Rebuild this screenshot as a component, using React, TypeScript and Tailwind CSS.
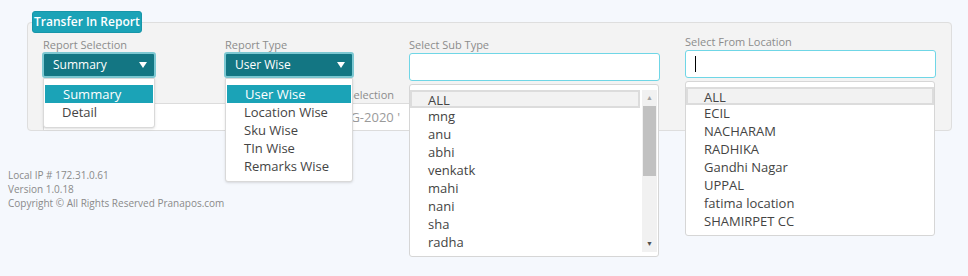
const subTypes = ["ALL", "mng", "anu", "abhi", "venkatk", "mahi", "nani", "sha", "radha"];
const locations = ["ALL", "ECIL", "NACHARAM", "RADHIKA", "Gandhi Nagar", "UPPAL", "fatima location", "SHAMIRPET CC"];
const reportTypes = ["User Wise", "Location Wise", "Sku Wise", "TIn Wise", "Remarks Wise"];

function TealSelect({ value, options, width }: { value: string; options: string[]; width: string }) {
  return (
    <div className={`relative ${width}`}>
      <div className="h-[26px] rounded-[3px] border-2 border-[#7cc8d2] bg-[#137683] flex items-center justify-between pl-[9px] pr-[7px] text-white text-[12px]">
        <span>{value}</span>
        {/* caret */}
        <span className="w-0 h-0 border-l-[4px] border-r-[4px] border-t-[6px] border-l-transparent border-r-transparent border-t-white" />
      </div>
      {/* open list */}
      <div className="absolute left-[1px] right-[1px] top-[26px] z-20 bg-white border border-[#d9d9d9] rounded-b-[3px] pt-[6px] pb-[6px] shadow-sm">
        {options.map((o, i) => (
          <div
            key={o}
            className={`h-[18px] leading-[18px] pl-[18px] text-[13px] ${
              i === 0 ? "bg-[#1ba3b7] text-white mx-[1px] pl-[17px]" : "text-[#444]"
            }`}
          >
            {o}
          </div>
        ))}
      </div>
    </div>
  );
}

function ListBox({ items, scroll }: { items: string[]; scroll?: boolean }) {
  return (
    <div className="absolute left-0 right-[1px] z-20 bg-white border border-[#d6d6d6] rounded-[3px] pt-[5px] pb-[4px] flex">
      <div className="flex-1">
        {items.map((o, i) => (
          <div
            key={o}
            className={`h-[18px] leading-[16px] text-[13px] text-[#444] ${
              i === 0 ? "border-2 border-[#dcdcdc] bg-[#f2f2f2] pl-[16px]" : "pl-[18px]"
            }`}
          >
            {o}
          </div>
        ))}
      </div>
      {scroll && (
        <div className="w-[15px] ml-[2px] mr-[1px] bg-[#f1f1f1] flex flex-col items-center">
          <span className="text-[7px] text-[#a3a3a3] leading-[16px]">▲</span>
          <div className="w-[13px] h-[70px] bg-[#c1c1c1]" />
          <div className="flex-1" />
          <span className="text-[7px] text-[#505050] leading-[16px]">▼</span>
        </div>
      )}
    </div>
  );
}

export default function App() {
  return (
    <div className="w-[968px] h-[276px] bg-[#f5f8fd] pt-[11px] text-[#444] overflow-hidden" style={{ fontFamily: '"Open Sans", sans-serif' }}>
      <fieldset className="ml-[27px] w-[925px] h-[120px] border border-[#dedede] rounded-[4px] bg-[#f3f3f3] pl-[14px]">
        <legend className="-ml-[10px] h-[22px] px-[1px] bg-[#1ba3b7] border border-[#1796a9] rounded-[3px] text-white text-[12px] font-semibold leading-[20px]">
          Transfer In Report
        </legend>

        {/* first row */}
        <div className="flex mt-[4px]">
          <div className="w-[114px]">
            <div className="text-[11px] text-[#8c8c8c] h-[15px] leading-[15px] pl-[1px]">Report Selection</div>
            <TealSelect value="Summary" options={["Summary", "Detail"]} width="w-[114px]" />
          </div>

          <div className="w-[130px] ml-[68px]">
            <div className="text-[11px] text-[#8c8c8c] h-[15px] leading-[15px] pl-[1px]">Report Type</div>
            <TealSelect value="User Wise" options={reportTypes} width="w-[130px]" />
          </div>

          <div className="w-[251px] ml-[55px] relative">
            <div className="text-[11px] text-[#8c8c8c] h-[15px] leading-[15px]">Select Sub Type</div>
            <div className="h-[28px] mt-[1px] bg-white border border-[#6fd6e6] rounded-[3px]" />
            <div className="relative mt-[3px]">
              <ListBox items={subTypes} scroll />
            </div>
          </div>

          <div className="w-[251px] ml-[25px] -mt-[3px] relative">
            <div className="text-[11px] text-[#8c8c8c] h-[15px] leading-[15px]">Select From Location</div>
            <div className="h-[28px] mt-[1px] bg-white border border-[#6fd6e6] rounded-[3px] pl-[9px] flex items-center">
              <span className="w-[1px] h-[16px] bg-black" />
            </div>
            <div className="relative mt-[3px]">
              <ListBox items={locations} />
            </div>
          </div>
        </div>

        {/* second row */}
        <div className="w-[367px] ml-[1px] mt-[3px]">
          <div className="text-[11px] text-[#8c8c8c] h-[15px] leading-[15px] text-right pr-[16px]">Date Selection</div>
          <div className="h-[28px] mt-[1px] bg-white border border-[#dcdcdc] text-[13px] text-[#9a9a9a] leading-[26px] text-right pr-[9px]">
            31-AUG-2020 '
          </div>
        </div>
      </fieldset>

      <div className="ml-[8px] mt-[37px] text-[10px] leading-[14px] text-[#8a8a8a]">
        <div>Local IP # 172.31.0.61</div>
        <div>Version 1.0.18</div>
        <div>Copyright © All Rights Reserved Pranapos.com</div>
      </div>
    </div>
  );
}
